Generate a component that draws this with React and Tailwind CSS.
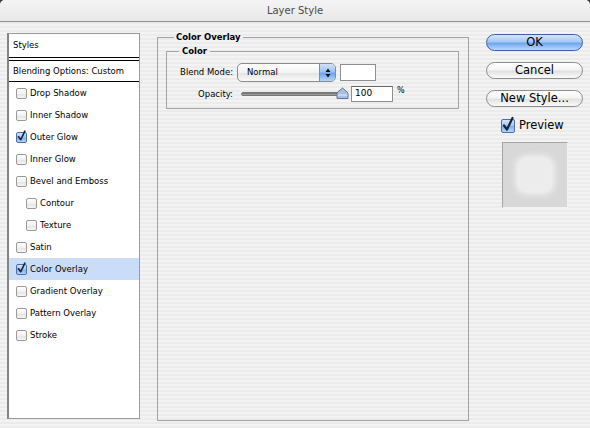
import React from 'react';

const items = [
  { label: 'Drop Shadow' },
  { label: 'Inner Shadow' },
  { label: 'Outer Glow', checked: true },
  { label: 'Inner Glow' },
  { label: 'Bevel and Emboss' },
  { label: 'Contour', indent: true },
  { label: 'Texture', indent: true },
  { label: 'Satin' },
  { label: 'Color Overlay', checked: true, active: true },
  { label: 'Gradient Overlay' },
  { label: 'Pattern Overlay' },
  { label: 'Stroke' },
];

function CheckBox({ checked, big }) {
  const size = big ? 'w-[14px] h-[14px]' : 'w-[11px] h-[11px]';
  if (checked) {
    return (
      <span className={`relative shrink-0 ${size} rounded-[2px] border border-[#4a6fa8] bg-[linear-gradient(to_bottom,#d6e6fa_0%,#9fc3ef_50%,#7eaee8_51%,#b7d5f8_100%)]`}>
        <svg className="absolute left-0 -top-[3px] w-full h-[calc(100%+3px)] overflow-visible" viewBox="0 0 12 15">
          <path d="M2 8.5 L5 12.5 L10.5 1" fill="none" stroke="#15243f" strokeWidth="2.2" strokeLinecap="round" strokeLinejoin="round" />
        </svg>
      </span>
    );
  }
  return (
    <span className={`shrink-0 ${size} rounded-[2px] border border-[#9a9a9a] bg-[linear-gradient(to_bottom,#ffffff_0%,#f1f1f1_50%,#e2e2e2_51%,#f6f6f6_100%)]`} />
  );
}

function AquaButton({ children, primary }) {
  return (
    <button
      className={`h-[17px] w-[97px] rounded-full border text-[11.5px] leading-none text-black flex items-center justify-center ${
        primary
          ? 'border-[#3f5f9c] bg-[linear-gradient(to_bottom,#d3e5fb_0%,#a4c9f3_45%,#6fa5ec_55%,#b9dafd_100%)]'
          : 'border-[#8c8c8c] bg-[linear-gradient(to_bottom,#ffffff_0%,#f4f4f4_45%,#e1e1e1_55%,#fbfbfb_100%)]'
      }`}
    >
      {children}
    </button>
  );
}

export default function App() {
  return (
    <div className="w-[590px] h-[428px] bg-[#3a3a3a] overflow-hidden">
      <div className="h-full rounded-t-[5px] flex flex-col font-['Lucida_Grande','DejaVu_Sans',sans-serif] text-black bg-[repeating-linear-gradient(to_bottom,#f3f3f3_0px,#f3f3f3_2px,#ebebeb_2px,#ebebeb_4px)]">
        {/* title bar */}
        <div className="h-[22px] shrink-0 flex items-center justify-center border-b border-[#8e8e8e] rounded-t-[5px] bg-[linear-gradient(to_bottom,#f4f4f4,#e8e8e8)] text-[10px] text-[#4a4a4a]">
          Layer Style
        </div>

        <div className="flex items-start flex-1">
          {/* styles list */}
          <div className="ml-[7px] mt-[11px] w-[133px] h-[386px] bg-white border border-[#9a9a9a] border-l-2 border-l-[#858585] text-[8.5px]">
            <div className="h-[23px] flex items-center pl-[4px]">Styles</div>
            <div className="h-px bg-black" />
            <div className="h-[2px]" />
            <div className="h-px bg-black" />
            <div className="h-[20px] flex items-center pl-[4px]">Blending Options: Custom</div>
            <div className="h-px bg-black" />
            {items.map((it) => (
              <div
                key={it.label}
                className={`h-[22px] flex items-center gap-[3px] ${it.indent ? 'pl-[17px]' : 'pl-[7px]'} ${
                  it.active ? 'bg-[#c9ddf8]' : ''
                }`}
              >
                <CheckBox checked={it.checked} />
                <span>{it.label}</span>
              </div>
            ))}
          </div>

          {/* color overlay */}
          <fieldset className="ml-[17px] mt-[9px] w-[312px] h-[390px] border border-[#a3a3a3] px-[8px] pt-[2px]">
            <legend className="ml-[8px] px-[2px] text-[8.5px] font-bold leading-[12px]">Color Overlay</legend>
            <fieldset className="w-[293px] border border-[#a3a3a3] pt-[6px] pb-[6px]">
              <legend className="ml-[12px] px-[3px] text-[8.5px] font-bold leading-[12px]">Color</legend>
              <div className="flex items-center h-[19px] text-[8.5px]">
                <span className="w-[66px] mr-[4px] text-right">Blend Mode:</span>
                <div className="w-[99px] h-[19px] rounded-[5px] border border-[#8a8a8a] flex overflow-hidden bg-[linear-gradient(to_bottom,#ffffff_0%,#f3f3f3_50%,#e3e3e3_51%,#f9f9f9_100%)]">
                  <span className="flex-1 flex items-center pl-[9px]">Normal</span>
                  <span className="w-[16px] border-l border-[#6d8fc4] flex items-center justify-center bg-[linear-gradient(to_bottom,#d0e3fb_0%,#9dc3f1_45%,#6fa5ec_55%,#b4d6fc_100%)]">
                    <svg width="6" height="10" viewBox="0 0 6 10">
                      <path d="M3 0.5 L5.5 4 L0.5 4 Z M3 9.5 L5.5 6 L0.5 6 Z" fill="#111" />
                    </svg>
                  </span>
                </div>
                <div className="ml-[4px] w-[36px] h-[17px] bg-white border border-[#8f8f8f]" />
              </div>
              <div className="flex items-center h-[16px] mt-[4px] text-[8.5px]">
                <span className="w-[66px] mr-[4px] text-right">Opacity:</span>
                <div className="relative w-[112px] h-[16px]">
                  <div className="absolute left-[4px] right-[7px] top-[6px] h-[4px] rounded-full bg-[linear-gradient(to_bottom,#6b6b6b,#a9a9a9)] border border-[#777]" />
                  <svg className="absolute right-0 top-[1px]" width="13" height="13" viewBox="0 0 13 13">
                    <path d="M1 11.5 L1 7 Q1 5 3 4 L6.5 1 L10 4 Q12 5 12 7 L12 11.5 Z" fill="#a7c0dd" stroke="#5d7598" strokeWidth="1" />
                    <path d="M1.5 8 L11.5 8" stroke="#e4eefa" strokeWidth="1" />
                  </svg>
                </div>
                <div className="ml-[2px] w-[42px] h-[16px] bg-white border border-[#8f8f8f] border-t-[#666] flex items-center pl-[3px] text-[9px]">
                  100
                </div>
                <span className="ml-[4px] text-[8px] self-start -mt-[1px]">%</span>
              </div>
            </fieldset>
          </fieldset>

          {/* buttons */}
          <div className="ml-[17px] mt-[12px] w-[97px] flex flex-col">
            <div className="flex flex-col gap-[11px]">
              <AquaButton primary>OK</AquaButton>
              <AquaButton>Cancel</AquaButton>
              <AquaButton>New Style...</AquaButton>
            </div>
            <div className="mt-[10px] pl-[15px] flex items-center gap-[4px] text-[11.5px]">
              <CheckBox checked big />
              <span>Preview</span>
            </div>
            <div className="mt-[8px] ml-[16px] w-[66px] h-[66px] bg-[#d8d8d8] border border-[#a5a5a5] border-r-[#f2f2f2] border-b-[#f2f2f2] flex items-center justify-center">
              <div className="w-[32px] h-[32px] rounded-[8px] bg-[#ececec] shadow-[0_0_6px_3px_#f4f4f4]" />
            </div>
          </div>
        </div>
      </div>
    </div>
  );
}
